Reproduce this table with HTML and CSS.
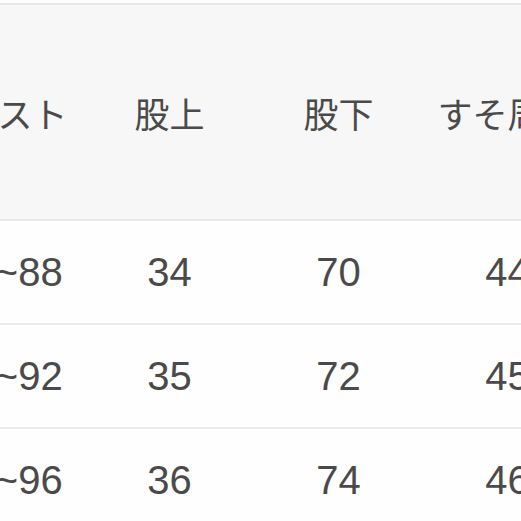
FILE: index.html
```html
<!DOCTYPE html>
<html lang="ja">
<head>
<meta charset="utf-8">
<link rel="stylesheet" href="styles.css">
</head>
<body>
<div class="viewport">
  <table class="size-table">
    <thead>
      <tr>
        <th class="first">ウエスト</th>
        <th>股上</th>
        <th>股下</th>
        <th>すそ周り</th>
      </tr>
    </thead>
    <tbody>
      <tr><td class="first">76~88</td><td>34</td><td>70</td><td>44</td></tr>
      <tr><td class="first">80~92</td><td>35</td><td>72</td><td>45</td></tr>
      <tr><td class="first">84~96</td><td>36</td><td>74</td><td>46</td></tr>
    </tbody>
  </table>
</div>
</body>
</html>
```

FILE: styles.css
```css
html, body {
  margin: 0;
  padding: 0;
  background: #fdfdfd;
  overflow: hidden;
}

.viewport {
  width: 521px;
  height: 521px;
  overflow: hidden;
  padding-top: 3px;
  box-sizing: border-box;
}

.size-table {
  border-collapse: collapse;
  table-layout: fixed;
  width: 676px;
  margin-left: -84px;
  color: #4a4a4a;
  font-family: "Liberation Sans", "Noto Sans CJK JP", sans-serif;
}

.size-table th,
.size-table td {
  box-sizing: border-box;
  width: 169px;
  text-align: center;
  padding: 0;
  white-space: nowrap;
}

.size-table th {
  height: 216px;
  background: #f7f7f7;
  font-family: "Noto Sans CJK JP", sans-serif;
  font-weight: 400;
  font-size: 35px;
  border-top: 2px solid #e8e8e8;
  border-bottom: 2px solid #e8e8e8;
}

.size-table th.first {
  padding-right: 6px;
}

.size-table td {
  height: 104px;
  font-size: 40px;
  border-bottom: 2px solid #ececec;
  background: #fefefe;
}

.size-table td.first {
  padding-left: 12px;
}
```
